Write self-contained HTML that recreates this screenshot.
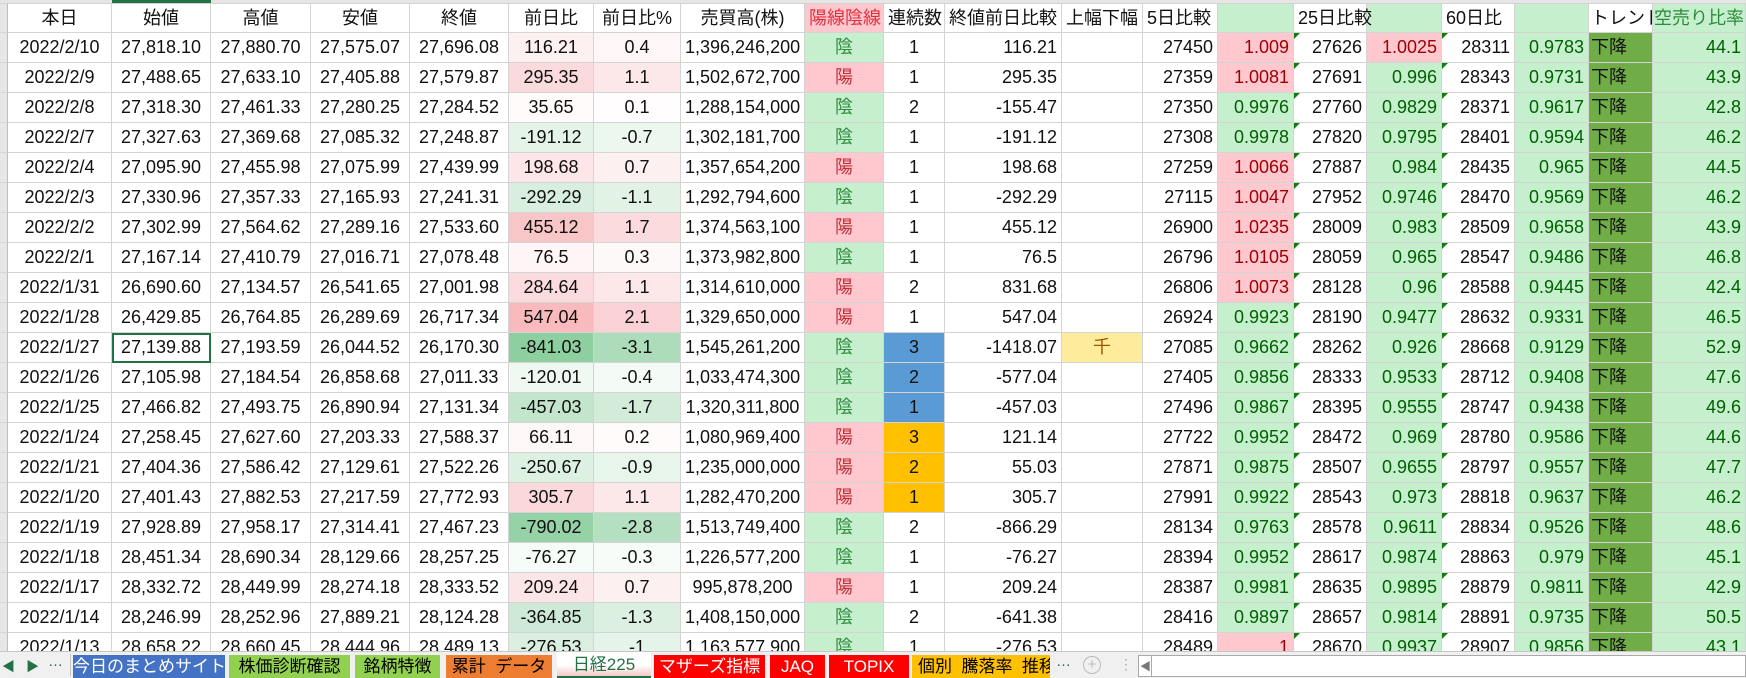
<!DOCTYPE html>
<html><head><meta charset="utf-8">
<style>
body{margin:0;width:1746px;height:678px;overflow:hidden;background:#fff;font-family:"Liberation Sans","Noto Sans CJK JP",sans-serif;font-size:18px;position:relative}
.top{position:absolute;left:0;top:0;width:1746px;height:3px;background:#e6e6e6}
.selh{position:absolute;left:112px;top:0;width:99px;height:3px;background:#217346}
table{position:absolute;top:3px;left:0;border-collapse:separate;border-spacing:0;table-layout:fixed;width:1746px}
td{height:29px;line-height:29px;padding:0 4px;border-right:1px solid #d4d4d4;border-bottom:1px solid #d4d4d4;white-space:nowrap;overflow:hidden;text-align:center;color:#111;box-sizing:content-box}
tr.h td{height:28px;line-height:28px;border-top:1px solid #d4d4d4}
td.rh{background:#e6e6e6;border-right:1px solid #bdbdbd;padding:0}
td.r{text-align:right}
td.l{text-align:left}
.y{background:#ffc7ce;color:#c0303a}
.n{background:#c6efce;color:#2e8b3e}
.p{background:#ffc7ce;color:#9c0006;text-align:right}
.g{background:#c6efce;color:#006100;text-align:right}
.tr{background:#70ad47;text-align:left;padding-left:2px}
.bl{background:#5b9bd5}
.or{background:#ffc000}
.sen{background:#ffeb9c;color:#9c5700}
.t{position:relative}
.t::before{content:"";position:absolute;left:0;top:0;border-top:6px solid #107c10;border-right:6px solid transparent}
.sel{outline:2px solid #217346;outline-offset:-2px;position:relative}
.tabs{position:absolute;left:0;top:651px;width:1746px;height:27px;background:#f0f0f0;border-top:1px solid #c6c6c6;box-sizing:border-box}
.tab{position:absolute;top:3px;height:23px;line-height:23px;font-size:17px;text-align:center;overflow:hidden;white-space:nowrap}
.nav{position:absolute;top:4px;font-size:13px;color:#217346}
</style></head><body>
<div class="top"></div><div class="selh"></div>
<table>
<colgroup><col style="width:8px"><col style="width:104px"><col style="width:99px"><col style="width:100px"><col style="width:99px"><col style="width:99px"><col style="width:85px"><col style="width:87px"><col style="width:124px"><col style="width:79px"><col style="width:61px"><col style="width:117px"><col style="width:81px"><col style="width:75px"><col style="width:76px"><col style="width:73px"><col style="width:75px"><col style="width:73px"><col style="width:74px"><col style="width:64px"><col style="width:93px"></colgroup>
<tr class="h"><td class="rh"></td><td>本日</td><td>始値</td><td>高値</td><td>安値</td><td>終値</td><td>前日比</td><td>前日比%</td><td>売買高(株)</td><td class="y" style="color:#e03040">陽線陰線</td><td>連続数</td><td>終値前日比較</td><td class="l">上幅下幅</td><td class="l">5日比較</td><td class="n"></td><td class="l" style="overflow:visible">25日比較</td><td class="n"></td><td class="l">60日比</td><td class="n"></td><td class="l" style="padding-left:2px">トレンド</td><td class="n l" style="color:#2e8b3e;padding-left:1px">空売り比率</td></tr>
<tr><td class="rh"></td><td>2022/2/10</td><td>27,818.10</td><td>27,880.70</td><td>27,575.07</td><td>27,696.08</td><td style="background:rgb(253,240,241)">116.21</td><td style="background:rgb(254,246,247)">0.4</td><td>1,396,246,200</td><td class="n">陰</td><td>1</td><td class="r">116.21</td><td></td><td class="r">27450</td><td class="p">1.009</td><td class="r t">27626</td><td class="p">1.0025</td><td class="r t">28311</td><td class="g">0.9783</td><td class="tr">下降</td><td class="g">44.1</td></tr>
<tr><td class="rh"></td><td>2022/2/9</td><td>27,488.65</td><td>27,633.10</td><td>27,405.88</td><td>27,579.87</td><td style="background:rgb(251,218,219)">295.35</td><td style="background:rgb(252,231,233)">1.1</td><td>1,502,672,700</td><td class="y">陽</td><td>1</td><td class="r">295.35</td><td></td><td class="r">27359</td><td class="p">1.0081</td><td class="r t">27691</td><td class="g">0.996</td><td class="r t">28343</td><td class="g">0.9731</td><td class="tr">下降</td><td class="g">43.9</td></tr>
<tr><td class="rh"></td><td>2022/2/8</td><td>27,318.30</td><td>27,461.33</td><td>27,280.25</td><td>27,284.52</td><td style="background:rgb(255,251,251)">35.65</td><td style="background:rgb(255,253,253)">0.1</td><td>1,288,154,000</td><td class="n">陰</td><td>2</td><td class="r">-155.47</td><td></td><td class="r">27350</td><td class="g">0.9976</td><td class="r t">27760</td><td class="g">0.9829</td><td class="r t">28371</td><td class="g">0.9617</td><td class="tr">下降</td><td class="g">42.8</td></tr>
<tr><td class="rh"></td><td>2022/2/7</td><td>27,327.63</td><td>27,369.68</td><td>27,085.32</td><td>27,248.87</td><td style="background:rgb(229,244,233)">-191.12</td><td style="background:rgb(236,247,239)">-0.7</td><td>1,302,181,700</td><td class="n">陰</td><td>1</td><td class="r">-191.12</td><td></td><td class="r">27308</td><td class="g">0.9978</td><td class="r t">27820</td><td class="g">0.9795</td><td class="r t">28401</td><td class="g">0.9594</td><td class="tr">下降</td><td class="g">46.2</td></tr>
<tr><td class="rh"></td><td>2022/2/4</td><td>27,095.90</td><td>27,455.98</td><td>27,075.99</td><td>27,439.99</td><td style="background:rgb(252,230,231)">198.68</td><td style="background:rgb(253,240,241)">0.7</td><td>1,357,654,200</td><td class="y">陽</td><td>1</td><td class="r">198.68</td><td></td><td class="r">27259</td><td class="p">1.0066</td><td class="r t">27887</td><td class="g">0.984</td><td class="r t">28435</td><td class="g">0.965</td><td class="tr">下降</td><td class="g">44.5</td></tr>
<tr><td class="rh"></td><td>2022/2/3</td><td>27,330.96</td><td>27,357.33</td><td>27,165.93</td><td>27,241.31</td><td style="background:rgb(216,238,222)">-292.29</td><td style="background:rgb(226,243,230)">-1.1</td><td>1,292,794,600</td><td class="n">陰</td><td>1</td><td class="r">-292.29</td><td></td><td class="r">27115</td><td class="p">1.0047</td><td class="r t">27952</td><td class="g">0.9746</td><td class="r t">28470</td><td class="g">0.9569</td><td class="tr">下降</td><td class="g">46.2</td></tr>
<tr><td class="rh"></td><td>2022/2/2</td><td>27,302.99</td><td>27,564.62</td><td>27,289.16</td><td>27,533.60</td><td style="background:rgb(249,198,200)">455.12</td><td style="background:rgb(251,219,221)">1.7</td><td>1,374,563,100</td><td class="y">陽</td><td>1</td><td class="r">455.12</td><td></td><td class="r">26900</td><td class="p">1.0235</td><td class="r t">28009</td><td class="g">0.983</td><td class="r t">28509</td><td class="g">0.9658</td><td class="tr">下降</td><td class="g">43.9</td></tr>
<tr><td class="rh"></td><td>2022/2/1</td><td>27,167.14</td><td>27,410.79</td><td>27,016.71</td><td>27,078.48</td><td style="background:rgb(254,245,246)">76.5</td><td style="background:rgb(254,249,249)">0.3</td><td>1,373,982,800</td><td class="n">陰</td><td>1</td><td class="r">76.5</td><td></td><td class="r">26796</td><td class="p">1.0105</td><td class="r t">28059</td><td class="g">0.965</td><td class="r t">28547</td><td class="g">0.9486</td><td class="tr">下降</td><td class="g">46.8</td></tr>
<tr><td class="rh"></td><td>2022/1/31</td><td>26,690.60</td><td>27,134.57</td><td>26,541.65</td><td>27,001.98</td><td style="background:rgb(251,219,221)">284.64</td><td style="background:rgb(252,231,233)">1.1</td><td>1,314,610,000</td><td class="y">陽</td><td>2</td><td class="r">831.68</td><td></td><td class="r">26806</td><td class="p">1.0073</td><td class="r t">28128</td><td class="g">0.96</td><td class="r t">28588</td><td class="g">0.9445</td><td class="tr">下降</td><td class="g">42.4</td></tr>
<tr><td class="rh"></td><td>2022/1/28</td><td>26,429.85</td><td>26,764.85</td><td>26,289.69</td><td>26,717.34</td><td style="background:rgb(248,186,189)">547.04</td><td style="background:rgb(250,210,213)">2.1</td><td>1,329,650,000</td><td class="y">陽</td><td>1</td><td class="r">547.04</td><td></td><td class="r">26924</td><td class="g">0.9923</td><td class="r t">28190</td><td class="g">0.9477</td><td class="r t">28632</td><td class="g">0.9331</td><td class="tr">下降</td><td class="g">46.5</td></tr>
<tr><td class="rh"></td><td>2022/1/27</td><td class="sel">27,139.88</td><td>27,193.59</td><td>26,044.52</td><td>26,170.30</td><td style="background:rgb(142,207,160)">-841.03</td><td style="background:rgb(172,220,185)">-3.1</td><td>1,545,261,200</td><td class="n">陰</td><td class="bl">3</td><td class="r">-1418.07</td><td class="sen">千</td><td class="r">27085</td><td class="g">0.9662</td><td class="r t">28262</td><td class="g">0.926</td><td class="r t">28668</td><td class="g">0.9129</td><td class="tr">下降</td><td class="g">52.9</td></tr>
<tr><td class="rh"></td><td>2022/1/26</td><td>27,105.98</td><td>27,184.54</td><td>26,858.68</td><td>27,011.33</td><td style="background:rgb(239,248,241)">-120.01</td><td style="background:rgb(244,250,246)">-0.4</td><td>1,033,474,300</td><td class="n">陰</td><td class="bl">2</td><td class="r">-577.04</td><td></td><td class="r">27405</td><td class="g">0.9856</td><td class="r t">28333</td><td class="g">0.9533</td><td class="r t">28712</td><td class="g">0.9408</td><td class="tr">下降</td><td class="g">47.6</td></tr>
<tr><td class="rh"></td><td>2022/1/25</td><td>27,466.82</td><td>27,493.75</td><td>26,890.94</td><td>27,131.34</td><td style="background:rgb(194,229,203)">-457.03</td><td style="background:rgb(210,236,217)">-1.7</td><td>1,320,311,800</td><td class="n">陰</td><td class="bl">1</td><td class="r">-457.03</td><td></td><td class="r">27496</td><td class="g">0.9867</td><td class="r t">28395</td><td class="g">0.9555</td><td class="r t">28747</td><td class="g">0.9438</td><td class="tr">下降</td><td class="g">49.6</td></tr>
<tr><td class="rh"></td><td>2022/1/24</td><td>27,258.45</td><td>27,627.60</td><td>27,203.33</td><td>27,588.37</td><td style="background:rgb(254,247,247)">66.11</td><td style="background:rgb(255,251,251)">0.2</td><td>1,080,969,400</td><td class="y">陽</td><td class="or">3</td><td class="r">121.14</td><td></td><td class="r">27722</td><td class="g">0.9952</td><td class="r t">28472</td><td class="g">0.969</td><td class="r t">28780</td><td class="g">0.9586</td><td class="tr">下降</td><td class="g">44.6</td></tr>
<tr><td class="rh"></td><td>2022/1/21</td><td>27,404.36</td><td>27,586.42</td><td>27,129.61</td><td>27,522.26</td><td style="background:rgb(221,241,227)">-250.67</td><td style="background:rgb(231,245,235)">-0.9</td><td>1,235,000,000</td><td class="y">陽</td><td class="or">2</td><td class="r">55.03</td><td></td><td class="r">27871</td><td class="g">0.9875</td><td class="r t">28507</td><td class="g">0.9655</td><td class="r t">28797</td><td class="g">0.9557</td><td class="tr">下降</td><td class="g">47.7</td></tr>
<tr><td class="rh"></td><td>2022/1/20</td><td>27,401.43</td><td>27,882.53</td><td>27,217.59</td><td>27,772.93</td><td style="background:rgb(251,216,218)">305.7</td><td style="background:rgb(252,231,233)">1.1</td><td>1,282,470,200</td><td class="y">陽</td><td class="or">1</td><td class="r">305.7</td><td></td><td class="r">27991</td><td class="g">0.9922</td><td class="r t">28543</td><td class="g">0.973</td><td class="r t">28818</td><td class="g">0.9637</td><td class="tr">下降</td><td class="g">46.2</td></tr>
<tr><td class="rh"></td><td>2022/1/19</td><td>27,928.89</td><td>27,958.17</td><td>27,314.41</td><td>27,467.23</td><td style="background:rgb(149,210,166)">-790.02</td><td style="background:rgb(180,223,192)">-2.8</td><td>1,513,749,400</td><td class="n">陰</td><td>2</td><td class="r">-866.29</td><td></td><td class="r">28134</td><td class="g">0.9763</td><td class="r t">28578</td><td class="g">0.9611</td><td class="r t">28834</td><td class="g">0.9526</td><td class="tr">下降</td><td class="g">48.6</td></tr>
<tr><td class="rh"></td><td>2022/1/18</td><td>28,451.34</td><td>28,690.34</td><td>28,129.66</td><td>28,257.25</td><td style="background:rgb(245,251,246)">-76.27</td><td style="background:rgb(247,252,248)">-0.3</td><td>1,226,577,200</td><td class="n">陰</td><td>1</td><td class="r">-76.27</td><td></td><td class="r">28394</td><td class="g">0.9952</td><td class="r t">28617</td><td class="g">0.9874</td><td class="r t">28863</td><td class="g">0.979</td><td class="tr">下降</td><td class="g">45.1</td></tr>
<tr><td class="rh"></td><td>2022/1/17</td><td>28,332.72</td><td>28,449.99</td><td>28,274.18</td><td>28,333.52</td><td style="background:rgb(252,229,230)">209.24</td><td style="background:rgb(253,240,241)">0.7</td><td>995,878,200</td><td class="y">陽</td><td>1</td><td class="r">209.24</td><td></td><td class="r">28387</td><td class="g">0.9981</td><td class="r t">28635</td><td class="g">0.9895</td><td class="r t">28879</td><td class="g">0.9811</td><td class="tr">下降</td><td class="g">42.9</td></tr>
<tr><td class="rh"></td><td>2022/1/14</td><td>28,246.99</td><td>28,252.96</td><td>27,889.21</td><td>28,124.28</td><td style="background:rgb(206,234,214)">-364.85</td><td style="background:rgb(220,240,226)">-1.3</td><td>1,408,150,000</td><td class="n">陰</td><td>2</td><td class="r">-641.38</td><td></td><td class="r">28416</td><td class="g">0.9897</td><td class="r t">28657</td><td class="g">0.9814</td><td class="r t">28891</td><td class="g">0.9735</td><td class="tr">下降</td><td class="g">50.5</td></tr>
<tr><td class="rh"></td><td>2022/1/13</td><td>28,658.22</td><td>28,660.45</td><td>28,444.96</td><td>28,489.13</td><td style="background:rgb(218,239,224)">-276.53</td><td style="background:rgb(228,244,232)">-1</td><td>1,163,577,900</td><td class="n">陰</td><td>1</td><td class="r">-276.53</td><td></td><td class="r">28489</td><td class="p">1</td><td class="r t">28670</td><td class="g">0.9937</td><td class="r t">28907</td><td class="g">0.9856</td><td class="tr">下降</td><td class="g">43.1</td></tr>
</table>
<div class="tabs">
<div class="nav" style="left:2px">◀</div><div class="nav" style="left:26px">▶</div><div class="nav" style="left:48px;color:#217346;font-size:15px;top:1px">…</div>
<div style="position:absolute;left:70px;top:2px;width:1px;height:22px;background:#c6c6c6"></div>
<div class="tab" style="left:73px;width:152px;background:#4472c4;color:#fff">今日のまとめサイト</div>
<div class="tab" style="left:229px;width:121px;background:#92d050">株価診断確認</div>
<div class="tab" style="left:355px;width:85px;background:#92d050">銘柄特徴</div>
<div class="tab" style="left:446px;width:106px;background:#ed7d31">累計&nbsp;&nbsp;データ</div>
<div class="tab" style="left:557px;width:94px;top:0;height:26px;line-height:25px;background:linear-gradient(#fff 55%,#f6c9c9);color:#217346;border-bottom:2px solid #217346;box-sizing:border-box">日経225</div>
<div class="tab" style="left:654px;width:111px;background:#ff0000;color:#fff">マザーズ指標</div>
<div class="tab" style="left:770px;width:55px;background:#ff0000;color:#fff">JAQ</div>
<div class="tab" style="left:829px;width:80px;background:#ff0000;color:#fff">TOPIX</div>
<div class="tab" style="left:912px;width:138px;background:#ffc000;text-align:left;padding-left:6px;box-sizing:border-box">個別&nbsp;&nbsp;騰落率&nbsp;&nbsp;推移</div>
<div class="nav" style="left:1056px;top:1px;font-size:15px">…</div>
<div style="position:absolute;left:1083px;top:4px;width:16px;height:16px;border:1px solid #bbb;border-radius:50%;color:#bbb;font-size:15px;line-height:16px;text-align:center">+</div>
<div style="position:absolute;left:1119px;top:4px;color:#aaa;font-size:14px">⋮</div>
<div style="position:absolute;left:1138px;top:3px;width:608px;height:22px;background:#fff;border:1px solid #aaa;box-sizing:border-box"></div>
<div style="position:absolute;left:1140px;top:6px;color:#777;font-size:11px">◀</div>
<div style="position:absolute;left:1151px;top:4px;width:1px;height:20px;background:#aaa"></div>
</div>
</body></html>
